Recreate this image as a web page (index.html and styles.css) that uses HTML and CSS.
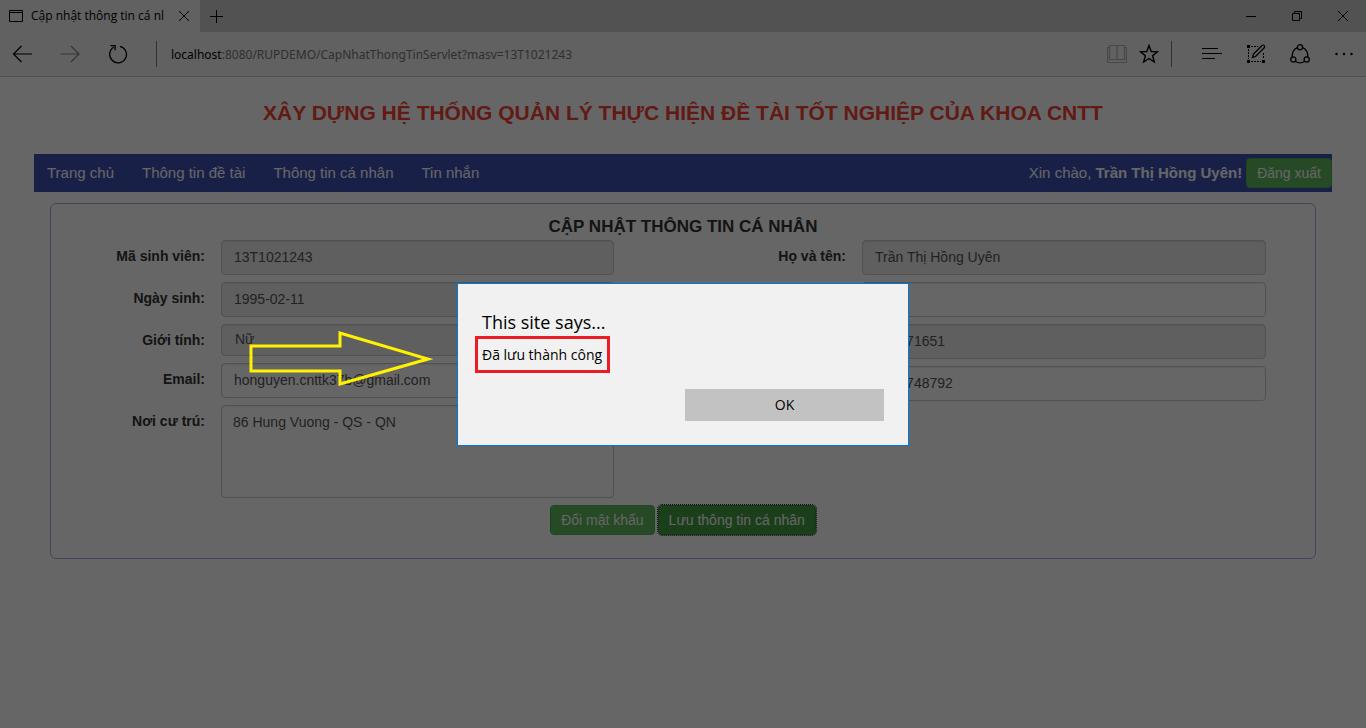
FILE: index.html
```html
<!DOCTYPE html>
<html lang="vi">
<head>
<meta charset="utf-8">
<title>Cập nhật thông tin cá nhân</title>
<link rel="stylesheet" href="styles.css">
</head>
<body>
<header class="browser">
  <div class="tabbar">
    <div class="tab">
      <svg class="tab-icon" width="14" height="12" viewBox="0 0 14 12"><path d="M.5.5h13v11H.5zM1 2.5h12" fill="none" stroke="#000"/></svg>
      <span class="tab-title">Cập nhật thông tin cá nl</span>
      <button class="tab-close" aria-label="Close tab"><svg width="10" height="10" viewBox="0 0 10 10"><path d="M0 0l10 10M10 0L0 10" stroke="#000"/></svg></button>
    </div>
    <button class="tab-new" aria-label="New tab"><svg width="13" height="13" viewBox="0 0 13 13"><path d="M6.500 0v13M0 6.500h13" stroke="#000"/></svg></button>
    <div class="window-buttons">
      <button aria-label="Minimize"><svg width="10" height="10" viewBox="0 0 10 10"><path d="M0 5.500h10" stroke="#000"/></svg></button>
      <button aria-label="Restore"><svg width="10" height="10" viewBox="0 0 10 10"><path d="M.5 2.500h7v7h-7zM2.500 2.500v-2h7v7h-2" fill="none" stroke="#000"/></svg></button>
      <button aria-label="Close"><svg width="10" height="10" viewBox="0 0 10 10"><path d="M0 0l10 10M10 0L0 10" stroke="#000"/></svg></button>
    </div>
  </div>
  <div class="toolbar">
    <div class="history">
      <button aria-label="Back"><svg width="20" height="18" viewBox="0 0 20 18"><path d="M9.500 1l-8 8 8 8M1.500 9H20" fill="none" stroke="#000" stroke-width="1.200"/></svg></button>
      <button aria-label="Forward"><svg width="20" height="18" viewBox="0 0 20 18"><path d="M11 1l8 8-8 8M19 9H.5" fill="none" stroke="#888" stroke-width="1.200"/></svg></button>
      <button aria-label="Refresh"><svg width="20" height="20" viewBox="0 0 20 20"><path d="M12 2.300a8.400 8.400 0 1 1-6.300 1M2.500 1.700h4.600v4.600" fill="none" stroke="#000" stroke-width="1.300"/></svg></button>
    </div>
    <span class="divider"></span>
    <div class="address"><span class="host">localhost</span>:8080/RUPDEMO/CapNhatThongTinServlet?masv=13T1021243</div>
    <div class="page-tools">
      <button aria-label="Reading view"><svg width="20" height="18" viewBox="0 0 20 18"><path d="M2.500.5h7.500v14H2.500zM10 .5h7.500v14H10zM2.500 2.500h-2v15h19v-15h-2" fill="none" stroke="#b4b4b4" stroke-width="1.200"/></svg></button>
      <button aria-label="Favorites"><svg width="20" height="20" viewBox="0 0 20 20"><path d="M10 1.500l2.200 6 6.300.3-4.900 4 1.700 6.200-5.300-3.500L4.700 18l1.700-6.200-4.900-4 6.300-.3z" fill="none" stroke="#000" stroke-width="1.400"/></svg></button>
    </div>
    <span class="divider"></span>
    <div class="menu-tools">
      <button aria-label="Hub"><svg width="20" height="12" viewBox="0 0 20 12"><path d="M0 .5h16M0 5.500h20M0 10.500h13" stroke="#000"/></svg></button>
      <button aria-label="Web note"><svg width="20" height="20" viewBox="0 0 20 20"><path d="M5 2.500h7M2.500 5v10M5 17.500h10M17.500 9v6" fill="none" stroke="#000" stroke-dasharray="2 1"/><path d="M1 1h3v3H1zM1 16h3v3H1zM16 16h3v3h-3z"/><path d="M6.500 13.500l1-3.500 8.500-8.500q1.800-1 2.500.5.500 1-.5 2L9.500 12.500z" fill="none" stroke="#000" stroke-width="1.300"/></svg></button>
      <button aria-label="Share"><svg width="20" height="20" viewBox="0 0 20 20"><g fill="none" stroke="#000" stroke-width="1.300"><path d="M7.400 3.700A8 8 0 0 0 2.500 13M12.600 3.700a8 8 0 0 1 4.900 9.300M5.500 17.500q4.500 2.600 9 0"/><circle cx="10" cy="3.300" r="2.600"/><circle cx="3.300" cy="15.500" r="2.600"/><circle cx="16.700" cy="15.500" r="2.600"/></g></svg></button>
      <button aria-label="More"><svg width="18" height="4" viewBox="0 0 18 4"><circle cx="1.500" cy="2" r="1.200"/><circle cx="9" cy="2" r="1.200"/><circle cx="16.500" cy="2" r="1.200"/></svg></button>
    </div>
  </div>
</header>

<main class="page">
  <h1 class="site-title">XÂY DỰNG HỆ THỐNG QUẢN LÝ THỰC HIỆN ĐỀ TÀI TỐT NGHIỆP CỦA KHOA CNTT</h1>
  <nav class="nav">
    <a href="#">Trang chủ</a>
    <a href="#">Thông tin đề tài</a>
    <a href="#">Thông tin cá nhân</a>
    <a href="#">Tin nhắn</a>
    <span class="greeting">Xin chào, <b>Trần Thị Hồng Uyên!</b></span>
    <button class="btn">Đăng xuất</button>
  </nav>
  <form class="panel">
    <h2 class="panel-title">CẬP NHẬT THÔNG TIN CÁ NHÂN</h2>
    <div class="columns">
      <div class="column column-left">
        <label for="masv">Mã sinh viên:</label>
        <input id="masv" class="field" value="13T1021243" disabled>
        <label for="birth">Ngày sinh:</label>
        <input id="birth" class="field" value="1995-02-11" disabled>
        <label for="sex">Giới tính:</label>
        <select id="sex" class="field field-select" disabled><option>Nữ</option></select>
        <label for="email">Email:</label>
        <input id="email" class="field" value="honguyen.cnttk37b@gmail.com">
        <label for="address">Nơi cư trú:</label>
        <textarea id="address" class="field field-area">86 Hung Vuong - QS - QN</textarea>
      </div>
      <div class="column column-right">
        <label for="name">Họ và tên:</label>
        <input id="name" class="field" value="Trần Thị Hồng Uyên" disabled>
        <input class="field" aria-label="Nơi sinh">
        <input class="field" aria-label="Số CMND" value="&nbsp;&nbsp;&nbsp;&nbsp;&nbsp;&nbsp;&nbsp;&nbsp;71651" disabled>
        <input class="field" aria-label="Số điện thoại" value="&nbsp;&nbsp;&nbsp;&nbsp;&nbsp;&nbsp;&nbsp;&nbsp;748792">
      </div>
    </div>
    <div class="actions">
      <button type="button" class="btn">Đổi mật khẩu</button>
      <button type="button" class="btn btn-active">Lưu thông tin cá nhân</button>
    </div>
  </form>
</main>

<div class="overlay">
  <svg class="arrow" width="184" height="56" viewBox="0 0 184 56"><path d="M2 15h89V2l88 26-88 25V40H2z" fill="none" stroke="#fff200" stroke-width="3"/></svg>
  <div class="dialog" role="alertdialog" aria-labelledby="dialog-title">
    <h2 id="dialog-title" class="dialog-title">This site says...</h2>
    <p class="dialog-message">Đã lưu thành công</p>
    <button class="dialog-ok">OK</button>
  </div>
</div>
</body>
</html>
```
FILE: styles.css
```css
* { box-sizing: border-box; }
body {
  margin: 0;
  background: #fff;
  color: #333;
  font: 14px/20px "Liberation Sans", Arial, sans-serif;
}
button { font: inherit; }
svg { display: block; flex: none; }

/* Browser frame */
.browser { color: #000; font-family: "Open Sans", "Noto Sans", sans-serif; }
.browser button {
  display: flex;
  align-items: center;
  justify-content: center;
  padding: 0;
  border: 0;
  background: none;
}
.tabbar { display: flex; height: 32px; background: #cdcdcd; }
.tab {
  display: flex;
  align-items: center;
  width: 200px;
  padding: 0 8px 0 9px;
  background: #f2f2f2;
  font-size: 12px;
}
.tab-title {
  flex: 1;
  min-width: 0;
  margin: 0 6px 0 8px;
  white-space: nowrap;
}
.tab-close { width: 16px; height: 32px; }
.tab-new { width: 33px; }
.window-buttons { display: flex; margin-left: auto; }
.window-buttons button { width: 46px; }
.toolbar {
  display: flex;
  align-items: center;
  height: 45px;
  border-bottom: 1px solid #c6c6c6;
  background: #f2f2f2;
}
.history { display: flex; padding-right: 14px; }
.history button { width: 48px; height: 44px; }
.history button:first-child { width: 46px; padding-right: 2px; }
.page-tools, .menu-tools { display: flex; }
.divider { width: 1px; height: 26px; background: #777; }
.history + .divider { margin-right: 14px; }
.address {
  flex: 1;
  padding-top: 1px;
  color: #777;
  font-family: "Noto Sans", "Open Sans", sans-serif;
  font-size: 12px;
  white-space: nowrap;
}
.host { color: #000; }
.page-tools { padding-right: 6px; }
.page-tools button { width: 32px; height: 44px; }
.menu-tools { padding-left: 18px; }
.menu-tools button { width: 44px; height: 44px; }

/* Page */
.page { padding: 20px 34px; }
.site-title {
  margin: 0 0 26px;
  color: #f44336;
  font-size: 21px;
  line-height: 31px;
  text-align: center;
}
.nav {
  display: flex;
  align-items: center;
  height: 38px;
  background: #3f51b5;
  color: #fff;
  font-size: 15px;
}
.nav a { margin-left: 13px; margin-right: 15px; color: #fff; text-decoration: none; }
.greeting { margin-left: auto; margin-right: 4px; }
.btn {
  height: 30px;
  padding: 0 10px;
  border: 1px solid #4cae4c;
  border-radius: 4px;
  background: #5cb85c;
  color: #fff;
  font-size: 14px;
}
.btn-active { border-color: #398439; background: #449d44; outline: 1px dotted #222; }
.panel {
  margin: 11px 16px 0;
  padding: 13px 49px 23px 0;
  border: 1px solid #aaaadd;
  border-radius: 6px;
}
.panel-title {
  margin: 0 -49px 3px 0;
  font-size: 17px;
  line-height: 20px;
  text-align: center;
}
.columns { display: flex; gap: 16px; }
.column {
  display: grid;
  align-content: start;
  gap: 7px 16px;
  min-width: 0;
}
.column-left { flex: 563 1 0; grid-template-columns: 154fr 393fr; }
.column-right { flex: 636 1 0; grid-template-columns: 216fr 404fr; }
.column-right .field { grid-column: 2; }
.column label { padding-top: 6px; font-weight: bold; text-align: right; }
.field {
  width: 100%;
  min-width: 0;
  height: 35px;
  margin: 0;
  padding: 5px 12px 7px;
  border: 1px solid #ccc;
  border-radius: 4px;
  background: #fff;
  box-shadow: inset 0 1px 1px rgba(0, 0, 0, .08);
  color: #555;
  font: inherit;
  resize: none;
}
.field:disabled { background: #eee; opacity: 1; }
.field-select { appearance: none; height: 32px; padding: 4px 13px 6px; }
.field-area { display: block; height: 93px; padding: 6px 11px; }
.actions { display: flex; justify-content: center; gap: 3px; margin: 7px -49px 0 0; }

/* Alert */
.overlay {
  position: fixed;
  inset: 0;
  display: flex;
  align-items: center;
  justify-content: center;
  background: rgba(0, 0, 0, .6);
}
.arrow { position: absolute; left: 249px; top: 331px; }
.dialog {
  display: flex;
  flex-direction: column;
  align-items: flex-start;
  width: 452px;
  padding: 24px;
  border: 1px solid #0078d7;
  background: #f1f1f1;
  color: #000;
  font-family: "Open Sans", "Noto Sans", sans-serif;
}
.dialog-title { margin: 0; font-size: 18px; font-weight: 400; line-height: 28px; }
.dialog-message {
  margin: 0 0 16px -7px;
  padding: 6px 5px 5px 4px;
  border: 3px solid #ed1c24;
  font-size: 14px;
}
.dialog-ok {
  align-self: flex-end;
  width: 199px;
  height: 32px;
  border: 0;
  background: #c2c2c2;
  color: #000;
}
```
